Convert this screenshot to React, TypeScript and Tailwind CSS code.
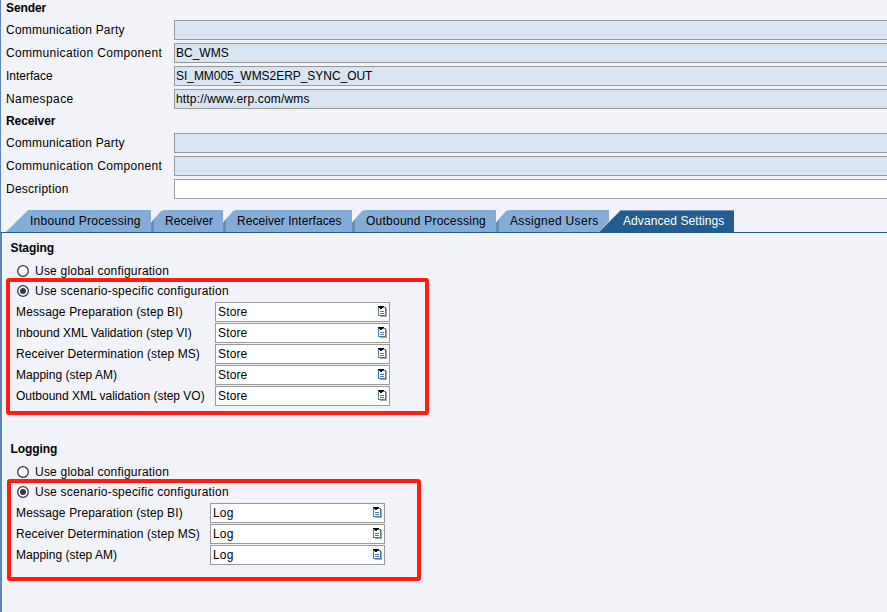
import React from "react";

type FieldProps = { label: string; spacing: string; value?: string; valueSpacing?: string; white?: boolean };

function Heading({ children, className = "" }: { children: React.ReactNode; className?: string }) {
  return <h2 className={`font-bold leading-4 tracking-[-0.08px] whitespace-nowrap ${className}`}>{children}</h2>;
}

function Field({ label, spacing, value = "", valueSpacing = "", white = false }: FieldProps) {
  return (
    <div className="flex h-5 items-center">
      <label className={`w-[168px] shrink-0 whitespace-nowrap ${spacing}`}>{label}</label>
      <div
        className={`flex h-5 flex-1 items-center border border-r-0 border-[#999999] pl-px whitespace-nowrap ${valueSpacing} ${white ? "bg-white" : "bg-[#d9e5f3]"}`}
      >
        {value}
      </div>
    </div>
  );
}

function Radio({ label, checked = false }: { label: string; checked?: boolean }) {
  return (
    <div className="flex h-5 items-center gap-[6px] pl-[15px]">
      <svg width="12" height="12" viewBox="0 0 12 12">
        <circle cx="6" cy="6" r="5.3" fill="#ffffff" stroke="#33384c" strokeWidth="1.3" />
        {checked && <circle cx="6" cy="6" r="3" fill="#33384c" />}
      </svg>
      <span className="whitespace-nowrap tracking-[0.22px]">{label}</span>
    </div>
  );
}

function ListIcon() {
  return (
    <svg className="mt-[3px] self-start" width="9" height="11" viewBox="0 0 9 11" shapeRendering="crispEdges">
      <path d="M2 2h7v9H2z" fill="#a3a3a3" />
      <path d="M0 1h8v9H0z" fill="#4d7ba8" />
      <path d="M1 2h6v7H1z" fill="#ffffff" />
      <path d="M2 5h4v1H2zM2 7h4v1H2z" fill="#4d7ba8" />
      <path d="M0 0h6v1H0zM1 1h4v1H1zM2 2h2v1H2z" fill="#000000" />
    </svg>
  );
}

type SelectRowProps = { label: string; spacing: string; value: string; labelWidth: string };

function SelectRow({ label, spacing, value, labelWidth }: SelectRowProps) {
  return (
    <div className="flex h-5 items-center pl-[14px]">
      <label className={`${labelWidth} ${spacing} shrink-0 whitespace-nowrap`}>{label}</label>
      <div className="flex h-5 w-[175px] items-center justify-between border border-[#999999] bg-white pr-[2px] pl-[2px] tracking-[0.15px]">
        <span>{value}</span>
        <ListIcon />
      </div>
    </div>
  );
}

function Tab({ label, size }: { label: string; size: string }) {
  return (
    <div
      className={`${size} flex h-[22px] shrink-0 items-center border-l-[3px] border-[#6590b5] bg-[#84acd9] pl-[11px] whitespace-nowrap [clip-path:polygon(0_13px,3px_9px,10px_1px,13px_0,100%_0,100%_100%,0_100%)]`}
    >
      {label}
    </div>
  );
}

export default function App() {
  return (
    <div className="relative h-[612px] w-[887px] overflow-hidden bg-[#f2f3f8] font-['Liberation_Sans',Arial,sans-serif] text-[12px] leading-4 text-black">
      <section className="h-[210px] border-l border-[#5b87b8] pl-[5px]">
        <Heading>Sender</Heading>
        <div className="mt-1 flex flex-col gap-[3px]">
          <Field label="Communication Party" spacing="tracking-[0.21px]" />
          <Field label="Communication Component" spacing="tracking-[0.32px]" value="BC_WMS" />
          <Field
            label="Interface"
            spacing="tracking-[0px]"
            value="SI_MM005_WMS2ERP_SYNC_OUT"
            valueSpacing="tracking-[-0.04px]"
          />
          <Field
            label="Namespace"
            spacing="tracking-[0.4px]"
            value="http://www.erp.com/wms"
            valueSpacing="tracking-[0.16px]"
          />
        </div>
        <Heading className="mt-1">Receiver</Heading>
        <div className="mt-1 flex flex-col gap-[3px]">
          <Field label="Communication Party" spacing="tracking-[0.21px]" />
          <Field label="Communication Component" spacing="tracking-[0.32px]" />
          <Field label="Description" spacing="tracking-[0.24px]" white />
        </div>
      </section>

      <nav className="flex h-[23px] border-b border-l border-b-[#255c8f] border-l-[#5b87b8] pl-[5px]">
        <div className="flex h-[22px] w-[145px] shrink-0 items-center bg-[#84acd9] pl-6 tracking-[0.26px] whitespace-nowrap [clip-path:polygon(0_100%,22px_0,100%_0,100%_100%)]">
          Inbound Processing
        </div>
        <Tab label="Receiver" size="w-[72px] tracking-[0.08px]" />
        <Tab label="Receiver Interfaces" size="w-[129px] tracking-[0.06px]" />
        <Tab label="Outbound Processing" size="w-[144px] tracking-[0.24px]" />
        <Tab label="Assigned Users" size="w-[113px] tracking-[0.32px]" />
        <div className="-ml-[10px] h-[22px] w-[135px] shrink-0 bg-[#f2f3f8] [clip-path:polygon(0_100%,10px_50%,10px_0,100%_0,100%_100%)]">
          <div className="flex h-[22px] items-center border-t border-[#6f9bc4] bg-[#255c8f] pb-px pl-[24px] tracking-[0.08px] whitespace-nowrap text-white [clip-path:polygon(0_100%,22px_0,100%_0,100%_100%)]">
            Advanced Settings
          </div>
        </div>
      </nav>

      <main className="h-[379px] border-l-2 border-[#5b87b8]">
        <section>
          <Heading className="pt-[7px] pl-[8.5px]">Staging</Heading>
          <div className="pt-[5px]">
            <Radio label="Use global configuration" />
            <Radio label="Use scenario-specific configuration" checked />
          </div>
          <div className="mt-[1px] flex flex-col gap-px">
            <SelectRow label="Message Preparation (step BI)" spacing="tracking-[0.14px]" value="Store" labelWidth="w-[199px]" />
            <SelectRow label="Inbound XML Validation (step VI)" spacing="tracking-[0.03px]" value="Store" labelWidth="w-[199px]" />
            <SelectRow label="Receiver Determination (step MS)" spacing="tracking-[0.1px]" value="Store" labelWidth="w-[199px]" />
            <SelectRow label="Mapping (step AM)" spacing="tracking-[0.02px]" value="Store" labelWidth="w-[199px]" />
            <SelectRow label="Outbound XML validation (step VO)" spacing="tracking-[-0.01px]" value="Store" labelWidth="w-[199px]" />
          </div>
        </section>
        <section className="mt-[35px]">
          <Heading className="pl-[8.5px]">Logging</Heading>
          <div className="pt-[5px]">
            <Radio label="Use global configuration" />
            <Radio label="Use scenario-specific configuration" checked />
          </div>
          <div className="mt-[1px] flex flex-col gap-px">
            <SelectRow label="Message Preparation (step BI)" spacing="tracking-[0.14px]" value="Log" labelWidth="w-[194px]" />
            <SelectRow label="Receiver Determination (step MS)" spacing="tracking-[0.1px]" value="Log" labelWidth="w-[194px]" />
            <SelectRow label="Mapping (step AM)" spacing="tracking-[0.02px]" value="Log" labelWidth="w-[194px]" />
          </div>
        </section>
      </main>

      <div className="pointer-events-none absolute top-[278px] left-[6px] h-[137px] w-[423px] rounded-[3px] border-4 border-[#ff1d12]" />
      <div className="pointer-events-none absolute top-[479px] left-[7px] h-[102px] w-[414px] rounded-[3px] border-4 border-[#ff1d12]" />
    </div>
  );
}
